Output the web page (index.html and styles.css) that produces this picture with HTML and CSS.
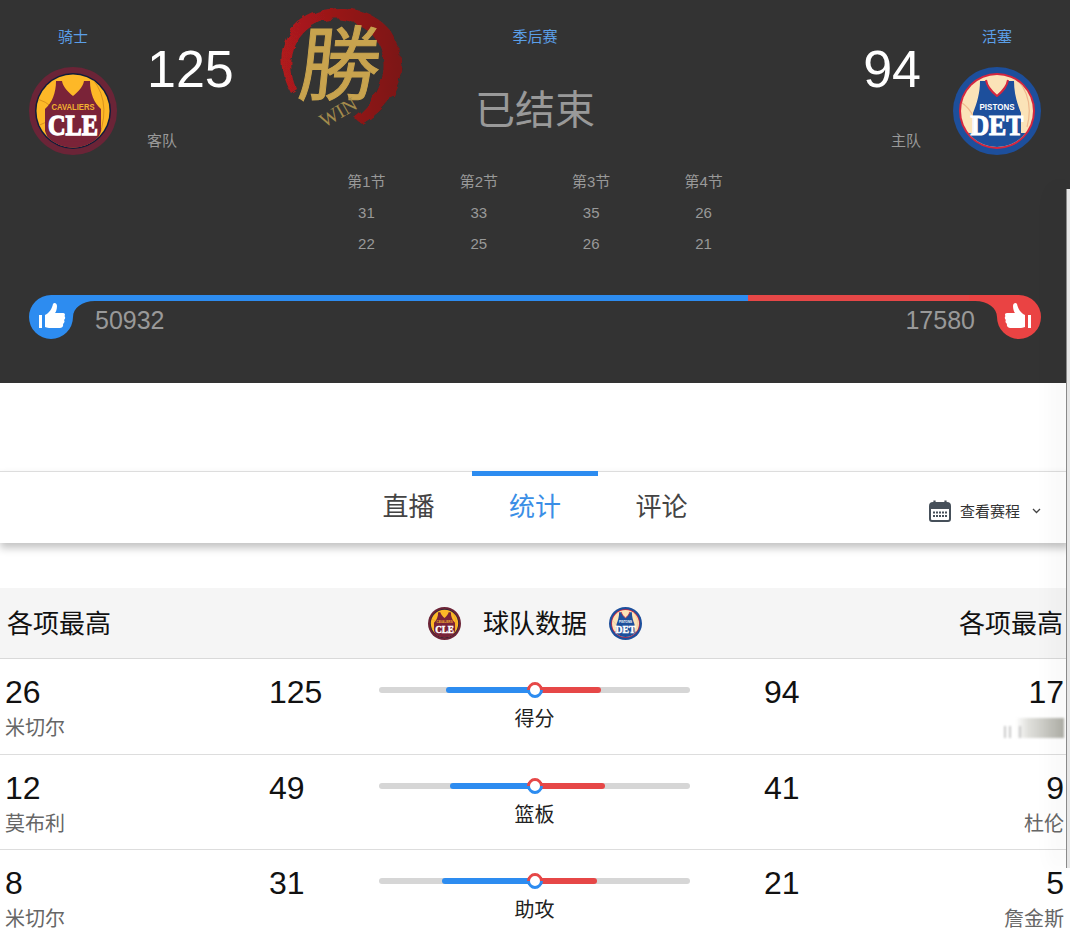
FILE: index.html
```html
<!DOCTYPE html>
<html lang="zh-CN">
<head>
    <meta charset="UTF-8">
    <meta name="viewport" content="width=device-width, initial-scale=1.0">
    <title>骑士 vs 活塞</title>
    <link rel="stylesheet" href="styles.css">
</head>
<body>
    <svg class="defs" width="0" height="0">
        <defs>
            <clipPath id="cleClip"><circle cx="44" cy="44" r="36.500"></circle></clipPath>
            <symbol id="logoCle" viewBox="0 0 88 88">
                <circle cx="44" cy="44" r="44" fill="#6b2437"></circle>
                <circle cx="44" cy="44" r="38" fill="#101c3c"></circle>
                <circle cx="44" cy="44" r="36.500" fill="#fdb827"></circle>
                <g clip-path="url(#cleClip)">
                    <path d="M4 30 Q30 38 44 66 M58 6 Q84 30 70 70 M6 60 Q30 48 60 46" fill="none" stroke="#d8921c" stroke-width="1"></path>
                    <path d="M27 14 H33 C34 20 39 25 44 29 C49 25 54 20 55 14 H61 C61 26 65 36 72 42 V64 L64 84 H24 L16 64 V42 C23 36 27 26 27 14 Z" fill="#7a2338"></path>
                    <path d="M6 66 Q44 84 82 66 V90 H6 Z" fill="#7a2338"></path>
                </g>
                <text class="logo-small" x="44" y="43" text-anchor="middle" font-size="9.500" textLength="43" lengthAdjust="spacingAndGlyphs" fill="#f2b231">CAVALIERS</text>
                <text class="logo-slab" x="44" y="68" text-anchor="middle" font-size="30" textLength="50" lengthAdjust="spacingAndGlyphs" fill="#fff" stroke="#fff" stroke-width="1.400">CLE</text>
            </symbol>
            <clipPath id="detClip"><circle cx="44" cy="44" r="36"></circle></clipPath>
            <symbol id="logoDet" viewBox="0 0 88 88">
                <circle cx="44" cy="44" r="44" fill="#1d4f9c"></circle>
                <circle cx="44" cy="44" r="38" fill="#d4263f"></circle>
                <circle cx="44" cy="44" r="36" fill="#fbe3b8"></circle>
                <g clip-path="url(#detClip)">
                    <path d="M6 34 Q24 44 26 72 M62 10 Q82 30 74 60" fill="none" stroke="#eeb98e" stroke-width="1.200"></path>
                    <path d="M27 14 H33 C34 20 39 25 44 29 C49 25 54 20 55 14 H61 C61 26 64 36 68 46 V66 H20 V46 C24 36 27 26 27 14 Z" fill="#1d4f9c"></path>
                    <path d="M6 66 H82 V90 H6 Z" fill="#1d4f9c"></path>
                    <path d="M33 13 C34 20 39 25 44 29 C49 25 54 20 55 13" fill="none" stroke="#d4263f" stroke-width="2"></path>
                </g>
                <text class="logo-small" x="44" y="43" text-anchor="middle" font-size="9.500" textLength="35" lengthAdjust="spacingAndGlyphs" fill="#fff">PISTONS</text>
                <text class="logo-slab" x="44" y="68" text-anchor="middle" font-size="30" textLength="53" lengthAdjust="spacingAndGlyphs" fill="#fff" stroke="#fff" stroke-width="1.200">DET</text>
            </symbol>
            <symbol id="voteCap" viewBox="0 0 72 44">
                <path d="M22 0 H72 V6 H66 C53 6 44 13 44 22 A22 22 0 1 1 22 0 Z" fill="currentColor"></path>
                <path d="M10 20 H13 V33 H10 Z M16 20 C20 18 23 14 24 9 C25 7 28 8 28 11 C28 14 27 17 26 18 H34 C36 18 36.500 20 35.500 21 C36.500 22 36.500 24 35 25 C36 26 35.500 28 34 29 C34.500 30 34 33 31 33 H20 C18 33 17 32 16 32 Z" fill="#fff"></path>
            </symbol>
            <filter id="rough" x="-10%" y="-10%" width="120%" height="120%">
                <feTurbulence type="fractalNoise" baseFrequency="0.09" numOctaves="2" seed="4"></feTurbulence>
                <feDisplacementMap in="SourceGraphic" scale="7"></feDisplacementMap>
            </filter>
        </defs>
    </svg>

    <div class="page">
        <header class="match">
            <div class="match-top">
                <div class="team">
                    <div class="team-id">
                        <a class="team-name">骑士</a>
                        <svg class="team-logo"><use href="#logoCle"></use></svg>
                    </div>
                    <div class="team-score">
                        <div class="score">125</div>
                        <div class="side">客队</div>
                    </div>
                    <svg class="win-stamp" viewBox="0 0 140 140">
                        <defs>
                            <linearGradient id="ringRed" x1="0" x2="1" y1="0" y2="0">
                                <stop offset="0" stop-color="#b01a1c"></stop>
                                <stop offset="1" stop-color="#7c1414"></stop>
                            </linearGradient>
                        </defs>
                        <path d="M20 92 C6 66 8 34 34 18 C62 0 106 6 124 36 C140 66 130 102 92 124 L84 118 C108 100 120 72 110 46 C98 22 66 12 42 26 C22 38 16 66 26 88 Z" fill="url(#ringRed)" filter="url(#rough)"></path>
                        <text class="stamp-char" x="68" y="94" text-anchor="middle" transform="skewX(-6) translate(9 0)">勝</text>
                        <text class="stamp-win" x="68" y="119" text-anchor="middle" transform="rotate(-30 68 112)">WIN</text>
                    </svg>
                </div>

                <div class="match-mid">
                    <a class="team-name">季后赛</a>
                    <div class="status">已结束</div>
                    <div class="quarters">
                        <span>第1节</span><span>第2节</span><span>第3节</span><span>第4节</span>
                        <span>31</span><span>33</span><span>35</span><span>26</span>
                        <span>22</span><span>25</span><span>26</span><span>21</span>
                    </div>
                </div>

                <div class="team team-home">
                    <div class="team-score">
                        <div class="score">94</div>
                        <div class="side">主队</div>
                    </div>
                    <div class="team-id">
                        <a class="team-name">活塞</a>
                        <svg class="team-logo"><use href="#logoDet"></use></svg>
                    </div>
                </div>
            </div>

            <div class="vote">
                <div class="vote-line">
                    <div class="vote-blue" style="width: 72%"></div>
                    <div class="vote-red"></div>
                </div>
                <svg class="vote-cap cap-left"><use href="#voteCap"></use></svg>
                <svg class="vote-cap cap-right"><use href="#voteCap"></use></svg>
                <div class="vote-count">
                    <span>50932</span>
                    <span>17580</span>
                </div>
            </div>
        </header>

        <nav class="tabs">
            <div></div>
            <div class="tab-list">
                <a class="tab">直播</a>
                <a class="tab active">统计</a>
                <a class="tab">评论</a>
            </div>
            <div class="schedule">
                <svg class="cal-icon" viewBox="0 0 22 22">
                    <path d="M1 6 Q1 3 4 3 H18 Q21 3 21 6 V19 Q21 21 19 21 H3 Q1 21 1 19 Z" fill="none" stroke="#46505a" stroke-width="2"></path>
                    <path d="M1 4 H21 V9 H1 Z" fill="#46505a"></path>
                    <path d="M5.500 0.500 V5 M16.500 0.500 V5" stroke="#46505a" stroke-width="2.200"></path>
                    <path d="M4 12.500 H18 M4 16 H18" stroke="#46505a" stroke-width="2" stroke-dasharray="2 1"></path>
                </svg>
                <span>查看赛程</span>
                <svg class="chevron" viewBox="0 0 9 6"><path d="M1 1 L4.500 4.500 L8 1" fill="none" stroke="#444" stroke-width="1.300"></path></svg>
            </div>
        </nav>

        <section class="stats">
            <div class="stats-head">
                <span>各项最高</span>
                <div class="stats-title">
                    <svg class="mini-logo"><use href="#logoCle"></use></svg>
                    <span>球队数据</span>
                    <svg class="mini-logo"><use href="#logoDet"></use></svg>
                </div>
                <span>各项最高</span>
            </div>

            <div class="stat-row">
                <div class="best">
                    <div class="num">26</div>
                    <div class="who">米切尔</div>
                </div>
                <div class="num">125</div>
                <div class="compare">
                    <div class="track">
                        <div class="fill-blue" style="width: 89px"></div>
                        <div class="fill-red" style="width: 66px"></div>
                        <i class="knob"></i>
                    </div>
                    <div class="stat-name">得分</div>
                </div>
                <div class="num away-total">94</div>
                <div class="best best-right">
                    <div class="num">17</div>
                    <div class="smudge"></div>
                </div>
            </div>

            <div class="stat-row">
                <div class="best">
                    <div class="num">12</div>
                    <div class="who">莫布利</div>
                </div>
                <div class="num">49</div>
                <div class="compare">
                    <div class="track">
                        <div class="fill-blue" style="width: 85px"></div>
                        <div class="fill-red" style="width: 70px"></div>
                        <i class="knob"></i>
                    </div>
                    <div class="stat-name">篮板</div>
                </div>
                <div class="num away-total">41</div>
                <div class="best best-right">
                    <div class="num">9</div>
                    <div class="who">杜伦</div>
                </div>
            </div>

            <div class="stat-row">
                <div class="best">
                    <div class="num">8</div>
                    <div class="who">米切尔</div>
                </div>
                <div class="num">31</div>
                <div class="compare">
                    <div class="track">
                        <div class="fill-blue" style="width: 93px"></div>
                        <div class="fill-red" style="width: 62px"></div>
                        <i class="knob"></i>
                    </div>
                    <div class="stat-name">助攻</div>
                </div>
                <div class="num away-total">21</div>
                <div class="best best-right">
                    <div class="num">5</div>
                    <div class="who">詹金斯</div>
                </div>
            </div>
        </section>

        <div class="side-panel"></div>
    </div>
</body>
</html>
```

FILE: styles.css
```css
:root {
    --blue: #2d8cf0;
    --red: #e64747;
    --dark: #333333;
    --line: #dddddd;
}
html, body {
    height: 100%;
    margin: 0;
    overflow: hidden;
}
body {
    font-family: "Liberation Sans", "Noto Sans CJK SC", sans-serif;
    background: white;
    color: #111;
}
.defs {
    position: absolute;
}
.page {
    position: relative;
    height: 934px;
    overflow: hidden;
}

/* dark match header */
.match {
    background: var(--dark);
    padding: 26px 29px 44px;
    height: 383px;
    box-sizing: border-box;
}
.match-top {
    display: grid;
    grid-template-columns: minmax(0, 1fr) 450px minmax(0, 1fr);
}
.team {
    display: flex;
    align-items: flex-start;
}
.team-home {
    justify-content: flex-end;
}
.team-id {
    display: flex;
    flex-direction: column;
    align-items: center;
    width: 88px;
    flex: none;
}
.team-name {
    display: block;
    font-size: 15px;
    line-height: 21px;
    color: #5b9fe8;
    text-align: center;
}
.team-logo {
    width: 88px;
    height: 88px;
    margin-top: 20px;
}
.team-score {
    margin-left: 30px;
}
.team-home .team-score {
    margin: 0 32px 0 0;
    text-align: right;
}
.score {
    margin-top: 13px;
    font-size: 52px;
    line-height: 60px;
    color: white;
}
.side {
    margin-top: 32px;
    font-size: 15px;
    line-height: 20px;
    color: #999;
}
.win-stamp {
    flex: none;
    width: 140px;
    height: 140px;
    margin: -26px 0 0 36px;
}
.stamp-char {
    font-size: 82px;
    font-weight: 400;
    fill: #c8a34e;
    stroke: #c8a34e;
    stroke-width: 1px;
}
.stamp-win {
    font-family: "Liberation Serif", serif;
    font-size: 20px;
    fill: #a38b4c;
}
.logo-small {
    font-family: "Liberation Sans", sans-serif;
    font-weight: 700;
}
.logo-slab {
    font-family: "Liberation Serif", serif;
    font-weight: 700;
}
.match-mid {
    display: flex;
    flex-direction: column;
    align-items: center;
}
.status {
    margin-top: 33px;
    font-size: 40px;
    line-height: 60px;
    color: #999;
}
.quarters {
    display: grid;
    grid-template-columns: repeat(4, 112.400px);
    grid-auto-rows: 31px;
    margin-top: 26px;
    font-size: 15px;
    line-height: 31px;
    text-align: center;
    color: #999;
}

/* vote bar */
.vote {
    position: relative;
    height: 44px;
    margin-top: 36px;
}
.vote-line {
    display: flex;
    height: 6px;
    margin: 0 22px;
}
.vote-blue {
    background: var(--blue);
}
.vote-red {
    flex: 1;
    background: var(--red);
}
.vote-cap {
    position: absolute;
    top: 0;
    width: 72px;
    height: 44px;
}
.cap-left {
    left: 0;
    color: var(--blue);
}
.cap-right {
    right: 0;
    color: #ea4343;
    transform: scaleX(-1);
}
.vote-count {
    display: flex;
    justify-content: space-between;
    padding: 0 66px;
    font-size: 25px;
    line-height: 38px;
    color: #999;
}

/* tabs */
.tabs {
    display: grid;
    grid-template-columns: minmax(0, 1fr) auto minmax(0, 1fr);
    height: 72px;
    margin-top: 88px;
    box-sizing: border-box;
    border-top: 1px solid var(--line);
    background: white;
    box-shadow: 0 5px 8px rgba(0, 0, 0, 0.24);
}
.tab-list {
    display: flex;
    margin-top: -1px;
}
.tab {
    width: 126.500px;
    box-sizing: border-box;
    border-top: 5px solid transparent;
    font-size: 26px;
    line-height: 62px;
    text-align: center;
    color: #444;
}
.tab.active {
    border-color: var(--blue);
    color: #3a8ee6;
}
.schedule {
    display: flex;
    align-items: center;
    justify-content: flex-end;
    padding: 6px 29px 0 0;
    font-size: 15px;
    color: #333;
}
.cal-icon {
    width: 22px;
    height: 22px;
    margin-right: 9px;
}
.chevron {
    width: 9px;
    height: 6px;
    margin-left: 12px;
}

/* team stats */
.stats {
    margin-top: 45px;
}
.stats-head {
    display: flex;
    justify-content: space-between;
    align-items: center;
    height: 71px;
    box-sizing: border-box;
    padding: 0 7px 3px;
    background: #f5f5f5;
    border-bottom: 1px solid #d9d9d9;
    font-size: 26px;
    color: #111;
}
.stats-title {
    display: flex;
    align-items: center;
    gap: 22px;
}
.mini-logo {
    width: 33px;
    height: 33px;
    margin-top: 4px;
}
.stat-row {
    display: grid;
    grid-template-columns: 264px 110px 311px 1fr auto;
    height: 95.700px;
    box-sizing: border-box;
    padding: 15px 6px 0 5px;
    border-bottom: 1px solid var(--line);
}
.num {
    font-size: 32px;
    line-height: 36px;
    color: #111;
}
.away-total {
    margin-left: 74px;
}
.who {
    font-size: 20px;
    line-height: 36px;
    color: #666;
}
.best-right {
    text-align: right;
}
.smudge {
    width: 62px;
    height: 20px;
    margin: 8px 0 0 auto;
    filter: blur(0.8px);
    background:
        linear-gradient(90deg, transparent 2px, #c8c8c8 2px, #c8c8c8 4px, transparent 4px, transparent 7px, #c8c8c8 7px, #c8c8c8 9px, transparent 9px, transparent 17px, #c8c8c8 17px, #c8c8c8 19px, transparent 19px) bottom / 100% 12px no-repeat,
        linear-gradient(90deg, transparent 22%, #e0e0dc 42%, #b0b0a8 100%);
}
.compare {
    display: flex;
    flex-direction: column;
    align-items: center;
    padding-top: 13px;
}
.track {
    position: relative;
    display: grid;
    grid-template-columns: 1fr 1fr;
    width: 100%;
    height: 6px;
    border-radius: 3px;
    background: #d6d6d6;
}
.fill-blue {
    justify-self: end;
    background: var(--blue);
    border-radius: 3px 0 0 3px;
}
.fill-red {
    justify-self: start;
    background: var(--red);
    border-radius: 0 3px 3px 0;
}
.knob {
    position: absolute;
    left: 50%;
    top: -5px;
    width: 16px;
    height: 16px;
    margin-left: -8px;
    box-sizing: border-box;
    border: 3.500px solid;
    border-color: var(--red) var(--red) var(--blue) var(--blue);
    border-radius: 50%;
    background: white;
    transform: rotate(-45deg);
}
.stat-name {
    margin-top: 12px;
    font-size: 20px;
    line-height: 28px;
    color: #222;
}

/* panel edge sitting over the right side */
.side-panel {
    position: absolute;
    top: 189px;
    right: 0;
    width: 4px;
    height: 679px;
    box-sizing: border-box;
    border-left: 1px solid #8a8a8a;
    background: #e6e6e6;
    box-shadow: -8px 0 22px rgba(0, 0, 0, 0.14);
}
```
